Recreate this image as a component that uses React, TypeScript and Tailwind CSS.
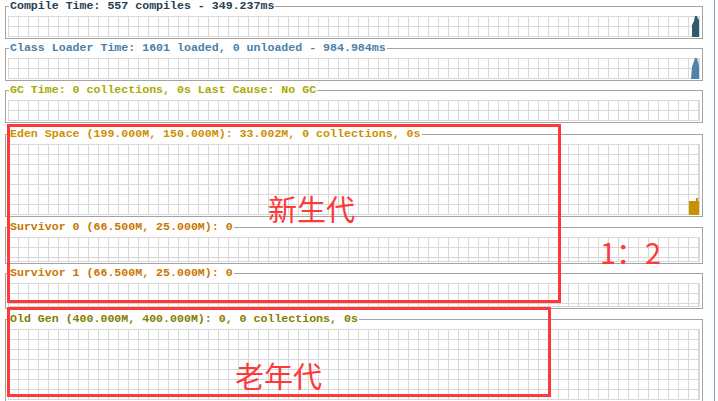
import React from 'react';

type Panel = {
  title: string;
  color: string;
  h: number;
  mt: string;
  bar?: string;
  barColor?: string;
};

const panels: Panel[] = [
  {
    title: 'Compile Time: 557 compiles - 349.237ms',
    color: 'text-[#263e52]',
    h: 21,
    mt: 'mt-0',
    bar: '684,21 684,9 686,5 687,0 689,0 690,3 691,4 691,21',
    barColor: '#2f5a70',
  },
  {
    title: 'Class Loader Time: 1601 loaded, 0 unloaded - 984.984ms',
    color: 'text-[#4b80a8]',
    h: 21,
    mt: 'mt-1',
    bar: '683,21 684,9 686,3 687,0 689,0 690,4 691,8 691,21',
    barColor: '#4f84a8',
  },
  {
    title: 'GC Time: 0 collections, 0s Last Cause: No GC',
    color: 'text-[#aaaa00]',
    h: 21,
    mt: 'mt-1',
  },
  {
    title: 'Eden Space (199.000M, 150.000M): 33.002M, 0 collections, 0s',
    color: 'text-[#cc9000]',
    h: 71,
    mt: 'mt-[6px]',
    bar: '681,71 681,57 688,57 688,54 690,54 690,57 691,57 691,71',
    barColor: '#c99000',
  },
  {
    title: 'Survivor 0 (66.500M, 25.000M): 0',
    color: 'text-[#c87700]',
    h: 25,
    mt: 'mt-[5px]',
  },
  {
    title: 'Survivor 1 (66.500M, 25.000M): 0',
    color: 'text-[#c87700]',
    h: 24,
    mt: 'mt-1',
  },
  {
    title: 'Old Gen (400.000M, 400.000M): 0, 0 collections, 0s',
    color: 'text-[#857c00]',
    h: 71,
    mt: 'mt-[5px]',
  },
];

function Grid({ h, bar, barColor }: { h: number; bar?: string; barColor?: string }) {
  const w = 692;
  const xs: number[] = [];
  for (let x = 0; x < w - 1; x += 10) xs.push(x + 0.5);
  xs.push(w - 0.5);
  const ys: number[] = [];
  for (let y = 0; y < h - 1; y += 10) ys.push(y + 0.5);
  ys.push(h - 0.5);
  return (
    <svg width={w} height={h} className="block">
      {xs.map((x) => (
        <line key={'x' + x} x1={x} x2={x} y1={0} y2={h} stroke="#d8d8d8" strokeWidth={1} />
      ))}
      {ys.map((y) => (
        <line key={'y' + y} x1={0} x2={w} y1={y} y2={y} stroke="#d8d8d8" strokeWidth={1} />
      ))}
      {bar && <polygon points={bar} fill={barColor} />}
    </svg>
  );
}

export default function App() {
  return (
    <div className="relative flex h-[401px] w-[718px] overflow-hidden bg-white font-['Liberation_Mono',monospace]">
      <div className="flex w-[714px] flex-col pl-[5px] pt-[1px]">
        {panels.map((p) => (
          <fieldset
            key={p.title}
            className={`${p.mt} w-[697px] border border-[#a3a3a3] px-[2px] pb-[1px] pt-[5px]`}
          >
            <legend
              className={`ml-[1px] px-[1px] text-[11.6px] font-bold leading-[10px] whitespace-pre ${p.color}`}
            >
              {p.title}
            </legend>
            <Grid h={p.h} bar={p.bar} barColor={p.barColor} />
          </fieldset>
        ))}
      </div>
      <div className="h-full w-[1px] bg-[#7f9fc2]" />

      {/* annotation overlays */}
      <div className="absolute left-[7px] top-[124px] h-[179px] w-[554px] border-[3px] border-[#fc3a3a]" />
      <div className="absolute left-[7px] top-[307px] h-[90px] w-[544px] border-[3px] border-[#fc3a3a]" />
      <span className="absolute left-[268px] top-[194px] text-[29px] leading-[29px] text-[#fc3a3a] font-['Noto_Sans_CJK_SC',sans-serif]">
        新生代
      </span>
      <span className="absolute left-[600px] top-[237px] text-[29px] leading-[29px] text-[#fc3a3a] font-['Noto_Sans_CJK_SC',sans-serif]">
        1：2
      </span>
      <span className="absolute left-[235px] top-[361px] text-[29px] leading-[29px] text-[#fc3a3a] font-['Noto_Sans_CJK_SC',sans-serif]">
        老年代
      </span>
    </div>
  );
}
